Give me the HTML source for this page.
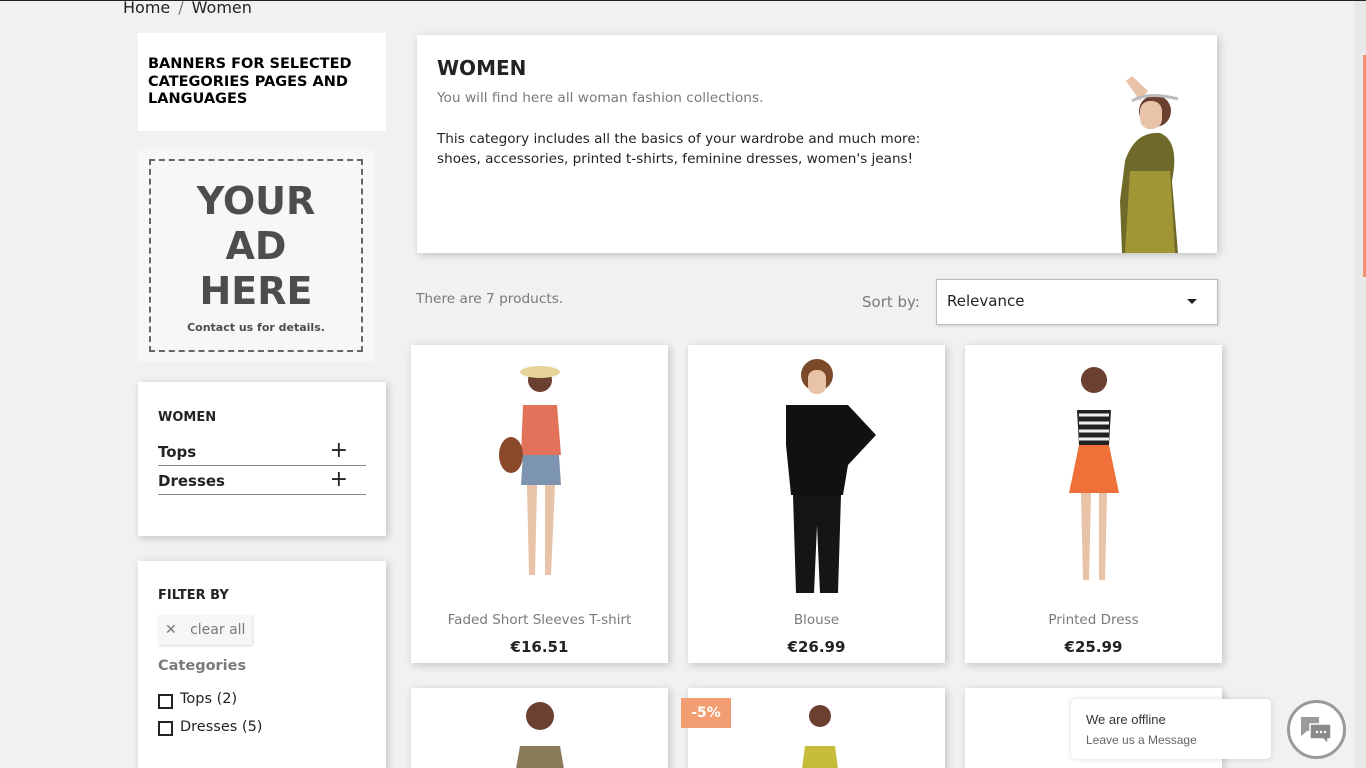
<!DOCTYPE html>
<html style="height:768px;overflow:hidden"><head><meta charset="utf-8"><style>
*{box-sizing:border-box;margin:0;padding:0}
body{width:1366px;height:768px;overflow:hidden;background:#f1f1f1;font-family:"Liberation Sans","DejaVu Sans",sans-serif;color:#232323;position:relative;border-top:1px solid #222}
.abs{position:absolute}
.card{background:#fff;position:absolute;box-shadow:2px 2px 8px rgba(0,0,0,.2)}
.bc{left:123px;top:-3px;font-size:16px;color:#232323}
.bc span{color:#7a7a7a;margin:0 8px}
.t{font-family:"DejaVu Sans",sans-serif}
.prod .img{position:absolute;left:0;top:0;width:257px;height:248px;background:#fff}
.prod .name{position:absolute;top:267px;width:100%;text-align:center;font-size:13.5px;color:#7a7a7a;font-family:"DejaVu Sans",sans-serif}
.prod .price{position:absolute;top:293px;width:100%;text-align:center;font-size:15px;font-weight:bold;font-family:"DejaVu Sans",sans-serif}
</style></head><body>
<div class="abs bc t">Home<span>/</span>Women</div>

<div class="abs" style="left:138px;top:32px;width:248px;height:98px;background:#fff"></div>
<div class="abs t" style="left:148px;top:55px;font-size:14.5px;font-weight:bold;line-height:17.5px;color:#000">BANNERS FOR SELECTED<br>CATEGORIES PAGES AND<br>LANGUAGES</div>

<div class="abs" style="left:138px;top:148px;width:236px;height:213px;background:#f7f7f7"></div>
<div class="abs" style="left:149px;top:158px;width:214px;height:193px;border:2px dashed #666"></div>
<div class="abs t" style="left:149px;top:178px;width:214px;text-align:center;font-size:38px;font-weight:bold;line-height:45px;color:#4d4d4d">YOUR<br>AD<br>HERE</div>
<div class="abs t" style="left:149px;top:320px;width:214px;text-align:center;font-size:11px;font-weight:bold;color:#4d4d4d">Contact us for details.</div>

<div class="card" style="left:138px;top:381px;width:248px;height:154px"></div>
<div class="abs t" style="left:158px;top:409px;font-size:13px;font-weight:bold">WOMEN</div>
<div class="abs t" style="left:158px;top:442px;width:208px;height:23px;border-bottom:1px solid #888;font-size:15px;font-weight:bold">Tops<span style="position:absolute;right:18px;top:-5px;font-size:22px;font-weight:normal">+</span></div>
<div class="abs t" style="left:158px;top:471px;width:208px;height:23px;border-bottom:1px solid #888;font-size:15px;font-weight:bold">Dresses<span style="position:absolute;right:18px;top:-5px;font-size:22px;font-weight:normal">+</span></div>

<div class="card" style="left:138px;top:560px;width:248px;height:220px"></div>
<div class="abs t" style="left:158px;top:587px;font-size:13px;font-weight:bold">FILTER BY</div>
<div class="abs t" style="left:158px;top:614px;width:94px;height:30px;background:#f6f6f6;box-shadow:1px 1px 2px rgba(0,0,0,.15);font-size:14px;color:#7a7a7a;line-height:30px;padding-left:7px">✕&nbsp;&nbsp;&nbsp;clear all</div>
<div class="abs t" style="left:158px;top:657px;font-size:14.5px;font-weight:bold;color:#7a7a7a">Categories</div>
<div class="abs" style="left:158px;top:693px;width:15px;height:15px;border:2px solid #232323"></div>
<div class="abs t" style="left:180px;top:690px;font-size:14.5px">Tops (2)</div>
<div class="abs" style="left:158px;top:720px;width:15px;height:15px;border:2px solid #232323"></div>
<div class="abs t" style="left:180px;top:718px;font-size:14.5px">Dresses (5)</div>

<div class="card" style="left:417px;top:34px;width:800px;height:218px"></div>
<div class="abs t" style="left:437px;top:55px;font-size:20px;font-weight:bold">WOMEN</div>
<div class="abs t" style="left:437px;top:89px;font-size:13.7px;color:#7a7a7a">You will find here all woman fashion collections.</div>
<div class="abs t" style="left:437px;top:128px;font-size:13.6px;line-height:20px">This category includes all the basics of your wardrobe and much more:<br>shoes, accessories, printed t-shirts, feminine dresses, women's jeans!</div>
<svg class="abs" style="left:1060px;top:70px" width="130" height="182"><circle cx="95" cy="40" r="16" fill="#6b4030"/><rect x="80" y="30" width="22" height="28" rx="10" fill="#e8c3a8"/><path d="M88 20 L72 5 L66 10 L80 30Z" fill="#e8c3a8"/><path d="M65 90 Q75 60 100 62 Q120 70 112 110 L118 182 L62 182 L60 130Z" fill="#6f6a2a"/><path d="M70 100 L110 100 L115 182 L65 182Z" fill="#b6a93a" opacity=".7"/><path d="M72 30 Q88 20 118 28" stroke="#bbb" stroke-width="3" fill="none"/></svg>

<div class="abs t" style="left:416px;top:290px;font-size:13.7px;color:#7a7a7a">There are 7 products.</div>
<div class="abs t" style="left:862px;top:292px;font-size:15px;color:#7a7a7a">Sort by:</div>
<div class="abs t" style="left:936px;top:278px;width:282px;height:46px;background:#fff;border:1px solid #bbb;box-shadow:1px 1px 3px rgba(0,0,0,.15);font-size:15px;line-height:42px;padding-left:10px">Relevance<span style="position:absolute;right:20px;top:19px;border:5px solid transparent;border-top:5px solid #232323"></span></div>

<div class="card prod" style="left:411px;top:344px;width:257px;height:318px"><div class="img"><svg width="257" height="248"><circle cx="129" cy="35" r="12" fill="#6b4030"/><ellipse cx="129" cy="27" rx="20" ry="6" fill="#e6d49a"/><path d="M112 60 L146 60 L150 110 L110 110Z" fill="#e2735a"/><path d="M112 110 L148 110 L150 140 L110 140Z" fill="#7d94b0"/><path d="M116 140 L126 140 L124 230 L118 230Z M134 140 L144 140 L140 230 L134 230Z" fill="#e8c3a8"/><ellipse cx="100" cy="110" rx="12" ry="18" fill="#8a4a2a"/></svg></div><div class="name">Faded Short Sleeves T-shirt</div><div class="price">€16.51</div></div>
<div class="card prod" style="left:688px;top:344px;width:257px;height:318px"><div class="img"><svg width="257" height="248"><circle cx="129" cy="30" r="16" fill="#7a4a2a"/><rect x="120" y="25" width="18" height="24" rx="8" fill="#e8c3a8"/><path d="M98 60 L160 60 L188 90 L160 120 L155 150 L103 150 L98 100Z" fill="#111"/><path d="M105 150 L153 150 L150 248 L132 248 L129 180 L126 248 L108 248Z" fill="#151515"/></svg></div><div class="name">Blouse</div><div class="price">€26.99</div></div>
<div class="card prod" style="left:965px;top:344px;width:257px;height:318px"><div class="img"><svg width="257" height="248"><circle cx="129" cy="35" r="13" fill="#6b4030"/><path d="M112 65 L146 65 L144 100 L114 100Z" fill="#222"/><path d="M114 70 h30 M114 78 h30 M114 86 h30 M114 94 h30" stroke="#eee" stroke-width="3"/><path d="M114 100 L144 100 L154 148 L104 148Z" fill="#f0703a"/><path d="M116 148 L126 148 L124 235 L118 235Z M134 148 L142 148 L140 235 L134 235Z" fill="#e8c3a8"/></svg></div><div class="name">Printed Dress</div><div class="price">€25.99</div></div>

<div class="card" style="left:411px;top:687px;width:257px;height:100px"></div>
<svg class="abs" style="left:500px;top:690px" width="80" height="78"><circle cx="40" cy="25" r="14" fill="#6b4030"/><path d="M20 55 L60 55 L64 78 L16 78Z" fill="#8a7a5a"/></svg>
<div class="card" style="left:688px;top:687px;width:257px;height:100px"></div>
<svg class="abs" style="left:780px;top:695px" width="80" height="73"><circle cx="40" cy="20" r="11" fill="#6b4030"/><path d="M25 50 L55 50 L58 73 L22 73Z" fill="#c7bb3a"/></svg>
<div class="abs t" style="left:681px;top:697px;width:50px;height:30px;background:#f39d72;color:#fff;font-weight:bold;font-size:14px;text-align:center;line-height:30px">-5%</div>
<div class="card" style="left:965px;top:687px;width:257px;height:100px"></div>

<div class="abs" style="left:1071px;top:698px;width:200px;height:60px;background:#fff;border-radius:5px;box-shadow:0 0 6px rgba(0,0,0,.15)"></div>
<div class="abs" style="left:1086px;top:711px;font-size:13px;color:#333">We are offline</div>
<div class="abs" style="left:1086px;top:732px;font-size:12px;color:#666">Leave us a Message</div>
<div class="abs" style="left:1287px;top:699px;width:59px;height:59px;border-radius:50%;border:3px solid #9a9a9a;background:#fff"></div>
<svg class="abs" style="left:1300px;top:714px" width="34" height="30"><path d="M1 2 h18 v14 h-12 l-6 5z" fill="#9a9a9a"/><path d="M10 9 h21 v15 h-3 v5 l-5-5 h-13z" fill="#8a8a8a" stroke="#fff" stroke-width="1.5"/><circle cx="17" cy="17" r="1.2" fill="#fff"/><circle cx="21" cy="17" r="1.2" fill="#fff"/><circle cx="25" cy="17" r="1.2" fill="#fff"/></svg>

<div class="abs" style="left:1354px;top:0;width:12px;height:768px;background:#e8e8e8"></div>
<div class="abs" style="left:1363px;top:54px;width:3px;height:222px;background:#f0906e"></div>
</body></html>
